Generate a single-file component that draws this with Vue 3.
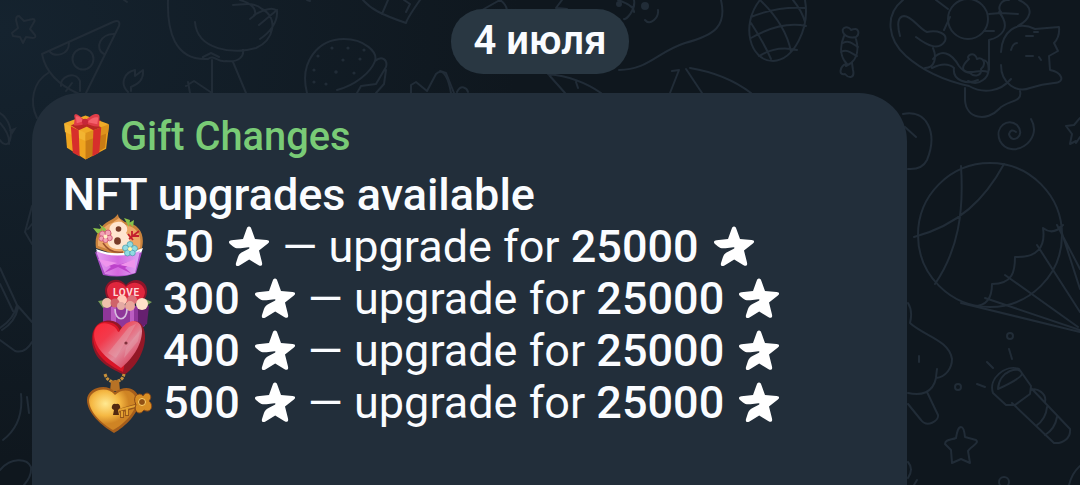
<script setup>
const rows = [
  { id: 'cupcake', price: '50' },
  { id: 'box', price: '300' },
  { id: 'heart', price: '400' },
  { id: 'locket', price: '500' },
]
const boxes = { cupcake: '64 221 100 52', box: '64 273 100 52', heart: '64 325 100 52', locket: '64 377 100 52' }
const star = 'M20 .6C21.500 .6 22 2 22.500 3.300L26 13L37.500 14C40.600 14.300 41 16 38.900 17.500L30 24.500L33 36.500C33.700 39.500 32 40.600 29.600 39.200L20.200 33.600L10.500 39.500C8 41 6.200 39.700 7 37L8.800 31.500C9.800 28.300 11.400 27 14 25.700L19.800 22.700C21 22 20.600 21.200 19.400 21.300L11.500 22.200C8 22.600 6 22.100 4 20.400L1 18C-.9 16.300-.1 14.500 2.500 14.300L14 13.100L17.500 3.300C18 2 18.500 .6 20 .6Z'
</script>

<template>
  <main class="chat">
    <svg class="pattern" viewBox="0 0 1080 485" aria-hidden="true">
      <g class="lines">
        <path d="M19 16l5 5 9-2c2 0 2 2 1 3l-4 7 5 6c1 2 0 3-2 3l-7-1-3 6-3-6-7-1-1-3 6-5-2-8c0-3 1-4 3-4Z" />
        <path d="M42 54L113 22q8-3 6 4L86 93M42 54q5 26 37 40M49 51c6 7 20 4 20-8M115 34c-15-1-21 15-11 20M48 73C33 82 29 102 37 118M61 86c-2-9 14-16 19-5v10M72 83l-6 8" />
        <circle cx="83" cy="59" r="10.5" />
        <path d="M128 92c-9-9-3-20 7-22v6l8-6c1 10-5 14-12 17v4M124 0l3 2M168 0c-1 30 6 61 40 59 6-5 10 4 18 2 14 2 18-6 17-11M195 22c2 28 39 33 61 26 18-8 23-30 6-39-9-8-20-4-29-4M212 60v33M233 62l13 31M240 0q17 5 15 15l-5 4M254 15q18-10 23-4c1 12-8 22-17 28M277 10l-18 15M203 57l8-4 8 4M186 86l8-5 18 12M188 82l2 11" />
        <path d="M307 93c-8-31 11-54 37-54 20 0 34 13 31 22-4 11-19 24-38 29M375 61c7-6 13-1 11 6l-10 17-15 2-4 7M386 70l-2 14-8 9M363 0c8 9 17 14 43 23 1-4 7-13 14-23M388 0l-6 14M404 0l6 4-4 8M411 93v-8l5-3 11 9 9-17c8-8 13 7 15 19M307 0l3 1" />
        <path d="M475 14L500 0q6 4 7 10M556 8l6-8M557 8l10 1M618 0q17 6 16 12M634 0c2 10-8 20-10 19M645 20c5 6 14-2 13-10M619 70c29 0 38-18 66-27 30-8 42-17 36-43M548 74q30 3 53 19M549 75l16 18M576 82l2 6M440 71l6 2 8 20M457 92c4-8 10-4 11 0M672 71l7-1-9 23M686 69l16 24M690 68q36 6 61 25" />
        <path d="M760 0c-20 25-10 61 13 61 21-1 37-33 32-61M751 17q27-11 54-9M751 38q30-17 55-12M759 56q18-11 38-6M751 23q13 20 20 36M760 0q26 25 31 52M793 0q9 11 12 22M844 34c-5-8 6-8 7-4 8-4 9 4 5 7-4 1-9 0-12-3ZM844 36c-5 12-3 22 3 28M856 39c4 14-1 23-10 27M843 43c7-4 12 3 15 4M841 52c7-4 12 3 16 4M846 64c-6 2-8 12-1 10 4 5 10 4 8-4l-1-7" />
        <path d="M903 0c-19 15-15 40 3 56 17 15 40 25 63 30 14 8 31 6 42-7M900 36q-5-19 4-20c8 0 14 12 23 16 10-2 21 1 18 9-6 10-17 5-29-4M933 48c4 9 2 20-8 20M933 59c8-10 18-7 26 7 9 12 19 2 29 6M932 68q14-7 22 0c-2 13 14 17 24 12M936 0l12 9M950 17l-6 13" />
        <circle cx="968" cy="19" r="20" />
        <path d="M989 14l12-1 17 1M984 31h10M999 12c13 16 2 25-10 28v30M1001 12c-4-4 0-13 8-12M1019 0c18 8 10 20-1 26M1001 52c1-20 15-32 34-23l24-2q1 10-5 16l4 8-9 5 1 14c11 2 17 12 4 13q-12 1-24 5c-13 5-29-4-29-23M1020 91c3 12-13 9-21 18-12 13-33 10-34-9V88M969 59c-9 8-7 13 1 14 5 5 12 2 11-4 6-5 2-13-4-10-2-9-12-3-8 0ZM983 60c7 0 8 15 0 20-5 4-11 3-15 1M1026 36h7M1026 56h7M1011 50c2-7 5-7 6-7M1039 57l2 3M1034 32h4" />
        <path d="M903 114c24-5 35 19 24 46q-5 10-19 9M905 127l11 10M1031 119c13 22-20 42-31 22-6-14 8-24 17-16 10 11-6 20-8 9q2-6 7-2M1080 118l-6 7-8 1 6 8-2 10 6-3M1080 137l-4 6" />
        <circle cx="990" cy="235" r="72" />
        <path d="M961 166c3 47-3 84-26 118M914 237c45-12 71-38 90-73M1043 228q10 8 20-3M1043 228c3 20-7 30-28 29 0 14-2 27-23 27 0 14-5 22-18 22M1057 225l23 44M1060 227l20 62M1037 245l43 67M1005 275l73 52M985 298l95 32M961 303l119 29M908 303q5 8 2 20c14 13 39 17 42 36 0 9-6 18-16 19-3 15-15 18-28 15M908 404l13 16c6 8 18 1 17-5l-11-23M919 356v6M936 377l1-8" />
        <path d="M961 427q3 0 4 10l11 3c4 3-6 7-8 11l2 12-9-4-9 4-1-13-6-6c0-5 7-4 11-6 1-6 2-11 5-11Z" />
        <path d="M993 393c-5-14 12-29 26-24l12 17-1 8-15 11-9 0ZM998 389c1-19 23-24 24-15q-2 5-24 15M1031 388l39 41c1 9-7 15-16 14l-42-40M1031 390c6-3 16 4 14 12M1047 407q-1 12-11 19M1057 417q-2 12-12 18M1009 349l3 10M987 362l6 6M977 384l8 3" />
        <circle cx="1010" cy="336" r="3" /><circle cx="958" cy="387" r="3" /><circle cx="1004" cy="482" r="5" />
        <path d="M1080 466q-8 7-11 19M908 462q6 7 0 16M917 480l-3 5M0 113c8 5 13 17 10 27-2 7-8 4-10 0M0 123q10 11 9 21M32 206l-7 26 7 12M28 229l4-5M0 268l17 37 15 17M0 284l13 27M17 305q-3 14-17 23M18 308q-3 14-16 22M0 340l15 11q10 3 17-9M21 394q3 30-18 46M27 397l2 16M0 470c11-13 27-12 31-3q1 9-7 18" />
      </g>
      <g class="dots">
        <circle cx="318" cy="56" r="1.6" /><circle cx="332" cy="48" r="1.6" /><circle cx="348" cy="48" r="1.6" /><circle cx="364" cy="50" r="1.6" /><circle cx="343" cy="60" r="1.6" /><circle cx="360" cy="59" r="1.6" /><circle cx="314" cy="70" r="1.6" /><circle cx="336" cy="72" r="1.8" /><circle cx="354" cy="73" r="1.6" /><circle cx="314" cy="82" r="1.6" /><circle cx="326" cy="84" r="1.6" /><circle cx="619" cy="4" r="3" /><circle cx="645" cy="6" r="4" /><path d="M9 130l8-3-5 8Z" />
      </g>
    </svg>

    <time class="date">4 июля</time>

    <article class="message">
      <header class="sender">
        <svg class="gift" viewBox="0 0 48 48">
          <path fill="#efa51f" d="M1 11L22 3l24 9-3 24-21 11L3 35Z" />
          <path fill="#c97c14" d="M22 22l22-9-2 22-20 12Z" />
          <path fill="#f0aa27" d="M0 10L22 2l24 9-24 11Z" />
          <path fill="#f3b431" d="M0 10l22 10v8L1 19Z" />
          <path fill="#dd921c" d="M22 20l24-9-1 9-23 8Z" />
          <path fill="#d72e2b" d="M7 13l8 4 1 27-7-4ZM30 17l8-3-2 26-7 4Z" />
          <path fill="#b92724" d="M7 12L30 4l8 3-23 10ZM10 6l6-2 22 10-8 3Z" />
          <path fill="#e03d48" d="M21 7C13-1 9-1 11 5l-1 7q7 1 12-2 8 4 14 3V6c2-7-5-8-14 1Z" />
          <path fill="#f4606b" d="M12 3q4-1 8 5l-7 2ZM35 4q-6-1-11 5l10 2Z" />
          <circle cx="21.500" cy="8.500" r="3.200" fill="#c52738" />
        </svg>
        <span>Gift Changes</span>
      </header>
      <h1 class="title">NFT upgrades available</h1>
      <ul class="list">
        <li v-for="row in rows" :key="row.id" class="row">
          <svg class="emoji" :viewBox="boxes[row.id]">
            <defs>
              <linearGradient id="wrap" x1="0" x2="1"><stop stop-color="#e3a0f0" /><stop offset=".5" stop-color="#d467df" /><stop offset="1" stop-color="#dda6f4" /></linearGradient>
              <linearGradient id="glass" x1="0" y1="0" x2="1" y2="1"><stop stop-color="#ff2635" /><stop offset=".3" stop-color="#f23a4c" /><stop offset=".6" stop-color="#e18799" /><stop offset="1" stop-color="#d51b3d" /></linearGradient>
              <radialGradient id="gold" cx=".35" cy=".35"><stop stop-color="#ffe991" /><stop offset=".6" stop-color="#f5b843" /><stop offset="1" stop-color="#cf8424" /></radialGradient>
            </defs>
            <g v-if="row.id === 'cupcake'">
              <path fill="#c9823c" d="M96 248c-2-13 4-22 13-27 4-2 7-4 9-7 0 4 3 5 7 8 16 2 21 15 16 29l-16 7Z" />
              <path fill="#eda866" d="M98 246c-1-12 6-21 14-23l7-5 6 7c14 2 17 13 15 23l-18 6Z" />
              <path fill="#8ac34a" d="M93 228l8 1 4 5-8-1ZM99 224l7 5-1 5ZM124 218l6 2-1 7ZM129 223l5-3-1 7Z" />
              <path fill="#fff" d="M96 249q22 9 47-1l-3 8q-20 9-41 0Z" />
              <path fill="#ffe5cf" d="M117 222c7-2 13 6 9 11 8 8 2 17-8 16-10 0-14-9-6-15-5-5-2-11 5-12Z" />
              <circle cx="118.500" cy="229" r="2.800" fill="#783b28" /><ellipse cx="117.500" cy="241" rx="3.400" ry="3.800" fill="#783b28" />
              <path fill="none" stroke="#9c522e" stroke-width="1.500" d="M103 243q7 11 20 9" />
              <g fill="#f3a3b5" stroke="#c94f70" stroke-width=".8"><circle cx="102.500" cy="234" r="3" /><circle cx="108" cy="233" r="3" /><circle cx="101.500" cy="238.500" r="2.600" /><circle cx="109.500" cy="238" r="2.800" /><circle cx="105.500" cy="240" r="2.600" /></g><circle cx="105.500" cy="236.500" r="2" fill="#fff1c5" />
              <path stroke="#c31f2d" stroke-width="1.800" fill="none" d="M129 239l10-8M132 231v5h7M128 234l5 6" />
              <path fill="#a74cc4" d="M95 252q22 10 47 0l-6 21q-15 6-33 2Z" />
              <path fill="url(#wrap)" d="M96 251q21 9 44 0l-5 22q-15 5-30 1Z" />
              <path fill="#bd42ca" d="M104 262l14 3 17-5-10 8 7 6-14-7-14 6 7-6Z" />
              <path fill="#ef94ec" d="M98 259l19 4-11 4ZM120 265l15-6v9Z" />
              <g fill="#91dbe2" stroke="#4799a8" stroke-width=".7"><circle cx="130" cy="244.500" r="3" /><circle cx="125.500" cy="248" r="3" /><circle cx="134.500" cy="248.500" r="3" /><circle cx="127.500" cy="253" r="3" /><circle cx="132.500" cy="253" r="2.800" /></g><circle cx="130" cy="249" r="2" fill="#fff6b0" />
            </g>
            <g v-else-if="row.id === 'box'">
              <path fill="#8f3699" d="M103 306h42v20l-9 4h-33Z" /><path fill="#66206f" d="M144 304l5 2-2 18-9 5v-22Z" /><path fill="#bb5dc1" d="M111 307h5v20h-5ZM130 307h4v20h-4Z" />
              <path fill="#8e1429" d="M128 303h-17c-4-4-6-8-6-13 1-11 14-14 21-5 8-9 21-5 21 6 0 6-3 9-7 12Z" />
              <path fill="#df263d" d="M128 302h-15c-4-4-6-7-6-12 1-9 13-11 19-3 7-8 18-4 19 5 0 4-3 8-6 10Z" />
              <text x="126" y="296" text-anchor="middle" fill="#ffd9da" font-size="10" font-weight="700" textLength="26">LOVE</text>
              <path fill="#799b58" d="M98 301l7-1 6 4-8 4ZM145 299l7 3-6 4Z" />
              <circle cx="107" cy="303" r="5" fill="#efc1ab" /><circle cx="122" cy="300" r="5" fill="#ffc8b7" /><circle cx="115" cy="303" r="4.500" fill="#cf6369" /><circle cx="132" cy="300" r="5" fill="#dc7178" /><circle cx="130" cy="306" r="5" fill="#eaa79b" /><circle cx="142" cy="304" r="6" fill="#ffe1c9" /><circle cx="121" cy="306" r="4" fill="#e5aaa4" />
              <path fill="none" stroke="#d6bddd" stroke-width="1.700" d="M115 309c0 13 12 13 12 0" />
            </g>
            <g v-else-if="row.id === 'heart'">
              <path fill="#931726" d="M124 375c-11-6-26-12-30-25-5-13-1-27 11-29 9-2 16 3 18 9 9-14 21-10 22 5 1 17-11 34-21 40Z" />
              <path fill="#d91527" d="M123 372c-11-5-24-13-28-25-5-15 1-25 11-25 8 0 13 4 14 10l7 20Z" />
              <path fill="url(#glass)" d="M121 368c-10-7-23-16-26-28-4-14 7-21 18-14 5 3 4 6 6 6 9-16 23-13 23-1 0 15-11 29-21 37Z" />
              <path fill="#e5a2ae" opacity=".45" d="M129 327l7-3-20 34-8-5ZM140 330l-2 11-14 17 2-10Z" /><circle cx="126" cy="343" r="1.600" fill="#81313c" />
            </g>
            <g v-else>
              <path fill="none" stroke="#c8903a" stroke-width="3" stroke-dasharray="3 1" d="M105 374q2 7 9 8 9-1 10-8" />
              <path fill="#b77225" d="M111 381l8-1 1 11h-10Z" />
              <path fill="#a65e1b" d="M114 433c-12-7-27-20-27-33 0-12 19-18 28-8 12-9 25-2 24 10 0 11-14 25-25 31Z" />
              <path fill="url(#gold)" d="M113 430c-9-5-24-17-24-30 1-10 18-15 26-5 10-9 22-3 21 7 0 10-13 23-23 28Z" />
              <path fill="#522911" d="M116 404a3 3 0 0 1 2 6l1 5h-6l1-5a3 3 0 0 1 2-6Z" />
              <path fill="none" stroke="#955519" stroke-width="4" d="M119 411l20-6M122 411v7M127 409v7" /><path fill="none" stroke="#e5a332" stroke-width="2.200" d="M119 410l20-5M122 411v6M127 409v6" />
              <path fill="#d88e24" stroke="#884717" d="M136 405c-5-11 5-13 7-9 4-7 11 0 6 5 6 5 1 13-5 9-5 7-11 0-8-5Z" /><circle cx="142" cy="402" r="3.500" fill="#915014" stroke="#ffd36b" />
            </g>
          </svg>
          <b>{{ row.price }}</b><svg class="star" viewBox="0 0 40 40"><path :d="star" /></svg><span class="label">— upgrade for <b>25000</b></span><svg class="star" viewBox="0 0 40 40"><path :d="star" /></svg>
        </li>
      </ul>
    </article>
  </main>
</template>

<style>
body { margin: 0; background: #10171f; }
</style>

<style scoped>
.chat {
  position: relative;
  width: 1080px;
  height: 485px;
  overflow: hidden;
  display: flex;
  flex-direction: column;
  box-sizing: border-box;
  padding-top: 9px;
  background: radial-gradient(ellipse 520px 430px at 0 30px, #15232f, rgba(16, 23, 31, 0)), #0f171e;
  font-family: Roboto, "Noto Sans", sans-serif;
  color: #fafcff;
}
.pattern { position: absolute; inset: 0; width: 1080px; height: 485px; }
.lines { fill: none; stroke: #212c37; stroke-width: 2; stroke-linecap: round; stroke-linejoin: round; }
.dots { fill: #212c37; }
.date {
  position: relative;
  flex: none;
  align-self: center;
  width: 178px;
  height: 65px;
  line-height: 64px;
  border-radius: 32px;
  background: #293742;
  text-align: center;
  font-size: 40px;
  font-weight: 600;
}
.message {
  position: relative;
  flex: 1;
  width: 875px;
  margin: 19px 0 0 32px;
  padding: 20px 32px 0;
  box-sizing: border-box;
  border-radius: 48px 48px 0 0;
  background: #222e3a;
}
.sender { display: flex; height: 56px; line-height: 48px; font-size: 39.8px; font-weight: 500; color: #79cb76; }
.gift { width: 47px; height: 48px; margin-right: 9px; }
.title { margin: 0 0 0 -1px; line-height: 52px; font-size: 45px; font-weight: 500; white-space: nowrap; }
.list { margin: 0; padding: 0; list-style: none; }
.row { display: flex; height: 52px; line-height: 52px; font-size: 45px; white-space: nowrap; }
.row b { font-weight: 500; }
.emoji { width: 100px; height: 52px; margin-right: -1px; overflow: visible; flex: none; }
.star { width: 40px; height: 40px; margin: 5px 0 0 15px; fill: #fff; flex: none; }
.label { margin-left: 13px; }
</style>
